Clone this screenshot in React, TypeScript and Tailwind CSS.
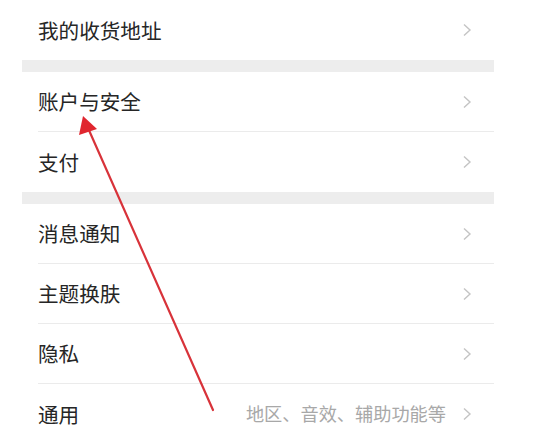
import React from 'react';

type Row = { label: string; hint?: string };

const groups: Row[][] = [
  [{ label: '我的收货地址' }],
  [{ label: '账户与安全' }, { label: '支付' }],
  [
    { label: '消息通知' },
    { label: '主题换肤' },
    { label: '隐私' },
    { label: '通用', hint: '地区、音效、辅助功能等' },
  ],
];

const Chevron = () => (
  <svg width="10" height="14" viewBox="0 0 10 14" className="shrink-0">
    <path d="M2 1.5 L8 7 L2 12.5" fill="none" stroke="#c4c4c4" strokeWidth="1.4" />
  </svg>
);

const SettingRow = ({ row, last }: { row: Row; last: boolean }) => (
  <div className="pl-4">
    <div
      className={`flex h-[60px] items-center pr-[22px] ${
        last ? '' : 'border-b border-[#ebebeb]'
      }`}
    >
      <span className="flex-1 text-[20.6px] text-[#262626]">{row.label}</span>
      {row.hint && (
        <span className="mr-[16px] text-[18.2px] text-[#a8a8a8]">{row.hint}</span>
      )}
      <Chevron />
    </div>
  </div>
);

export default function App() {
  return (
    <div
      className="relative h-[427px] w-[547px] overflow-hidden bg-white"
      style={{ fontFamily: '"Noto Sans CJK SC", "Noto Sans", sans-serif' }}
    >
      <div className="ml-[22px] w-[472px] bg-white">
        {groups.map((group, gi) => (
          <div key={gi}>
            {gi > 0 && <div className="h-[12px] bg-[#ededed]" />}
            {group.map((row, ri) => (
              <SettingRow key={row.label} row={row} last={ri === group.length - 1} />
            ))}
          </div>
        ))}
      </div>

      {/* red annotation arrow */}
      <svg
        className="pointer-events-none absolute left-0 top-0"
        width="547"
        height="427"
        viewBox="0 0 547 427"
      >
        <line x1="213" y1="410" x2="88" y2="128" stroke="#d8333a" strokeWidth="2.2" strokeLinecap="round" />
        <polygon points="83,116 97,129 79,135" fill="#e0262f" />
      </svg>
    </div>
  );
}
